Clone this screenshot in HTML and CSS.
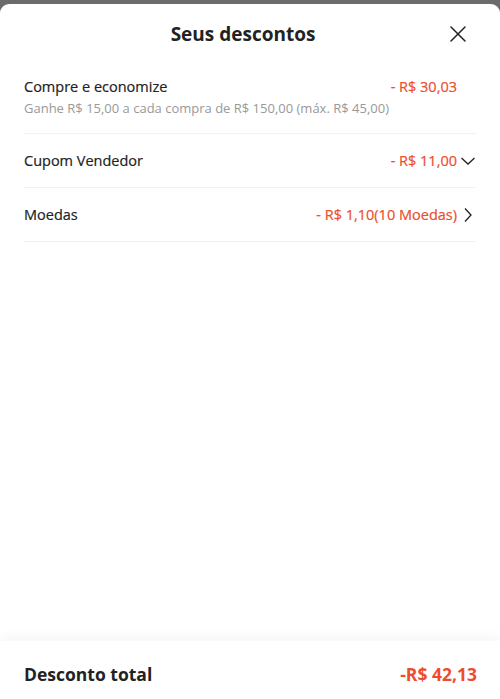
FILE: index.html
```html
<!DOCTYPE html>
<html lang="pt-BR">
<head>
  <meta charset="UTF-8">
  <meta name="viewport" content="width=device-width, initial-scale=1.0">
  <title>Seus descontos</title>
  <link rel="stylesheet" href="styles.css">
</head>
<body>
  <div class="sheet">
    <div class="sheet-header">
      <div class="sheet-title">Seus descontos</div>
      <button class="close" aria-label="Fechar">
        <svg width="16" height="16" viewBox="0 0 16 16">
          <path d="M1 1 L15 15 M15 1 L1 15" stroke="#222" stroke-width="1.5" fill="none" stroke-linecap="round"/>
        </svg>
      </button>
    </div>

    <div class="discounts">
      <div class="discount">
        <div class="discount-main">
          <div class="discount-name">Compre e economize</div>
          <div class="discount-value">- R$ 30,03</div>
          <div class="discount-icon"></div>
        </div>
        <div class="discount-note">Ganhe R$ 15,00 a cada compra de R$ 150,00 (máx. R$ 45,00)</div>
      </div>
      <div class="discount">
        <div class="discount-main">
          <div class="discount-name">Cupom Vendedor</div>
          <div class="discount-value">- R$ 11,00</div>
          <div class="discount-icon">
            <svg width="16" height="16" viewBox="0 0 16 16">
              <path d="M1.5 5 L8 11 L14.5 5" stroke="#222" stroke-width="1.3" fill="none"/>
            </svg>
          </div>
        </div>
      </div>
      <div class="discount">
        <div class="discount-main">
          <div class="discount-name">Moedas</div>
          <div class="discount-value">- R$ 1,10(10 Moedas)</div>
          <div class="discount-icon">
            <svg width="16" height="16" viewBox="0 0 16 16">
              <path d="M5 1.5 L11 8 L5 14.5" stroke="#222" stroke-width="1.3" fill="none"/>
            </svg>
          </div>
        </div>
      </div>
    </div>

    <div class="spacer"></div>

    <div class="total">
      <div class="total-label">Desconto total</div>
      <div class="total-value">-R$ 42,13</div>
    </div>
  </div>
</body>
</html>
```

FILE: styles.css
```css
html {
  box-sizing: border-box;
}
*, *:before, *:after {
  box-sizing: inherit;
}
body {
  margin: 0;
  padding: 4px 0 0;
  height: 699px;
  overflow: hidden;
  background: #6b6b6b;
  font-family: "Open Sans", "Noto Sans", sans-serif;
  color: #222;
  -webkit-font-smoothing: antialiased;
}

.sheet {
  height: 695px;
  background: #fff;
  border-radius: 9px 9px 0 0;
  display: flex;
  flex-direction: column;
}

.sheet-header {
  height: 60px;
  display: flex;
  align-items: center;
  justify-content: center;
  position: relative;
}

.sheet-title {
  font-size: 19px;
  font-weight: 700;
  line-height: 26px;
  margin-left: -14px;
}

.close {
  position: absolute;
  right: 34px;
  top: 22px;
  width: 16px;
  height: 16px;
  padding: 0;
  border: 0;
  background: none;
  display: flex;
}

.discounts {
  padding: 0 24px;
}

.discount {
  padding: 17px 0 16px;
  border-bottom: 1px solid #f2f2f2;
}
.discount:first-child {
  padding-top: 13px;
}

.discount-main {
  display: flex;
  align-items: center;
  font-size: 14.5px;
  line-height: 20px;
  -webkit-text-stroke: 0.2px currentColor;
}

.discount-name {
  flex: 1;
}

.discount-value {
  color: #ee4d2d;
}

.discount-icon {
  width: 19px;
  height: 16px;
  display: flex;
  justify-content: flex-end;
}

.discount-note {
  margin-top: 2px;
  font-size: 13px;
  line-height: 18px;
  color: #999;
}

.spacer {
  flex: 1;
}

.total {
  padding: 21px 23px 13px 24px;
  display: flex;
  justify-content: space-between;
  align-items: center;
  font-size: 17.5px;
  font-weight: 700;
  line-height: 24px;
  box-shadow: 0 -6px 10px rgba(0, 0, 0, 0.03);
}

.total-value {
  color: #ee4d2d;
}
```
